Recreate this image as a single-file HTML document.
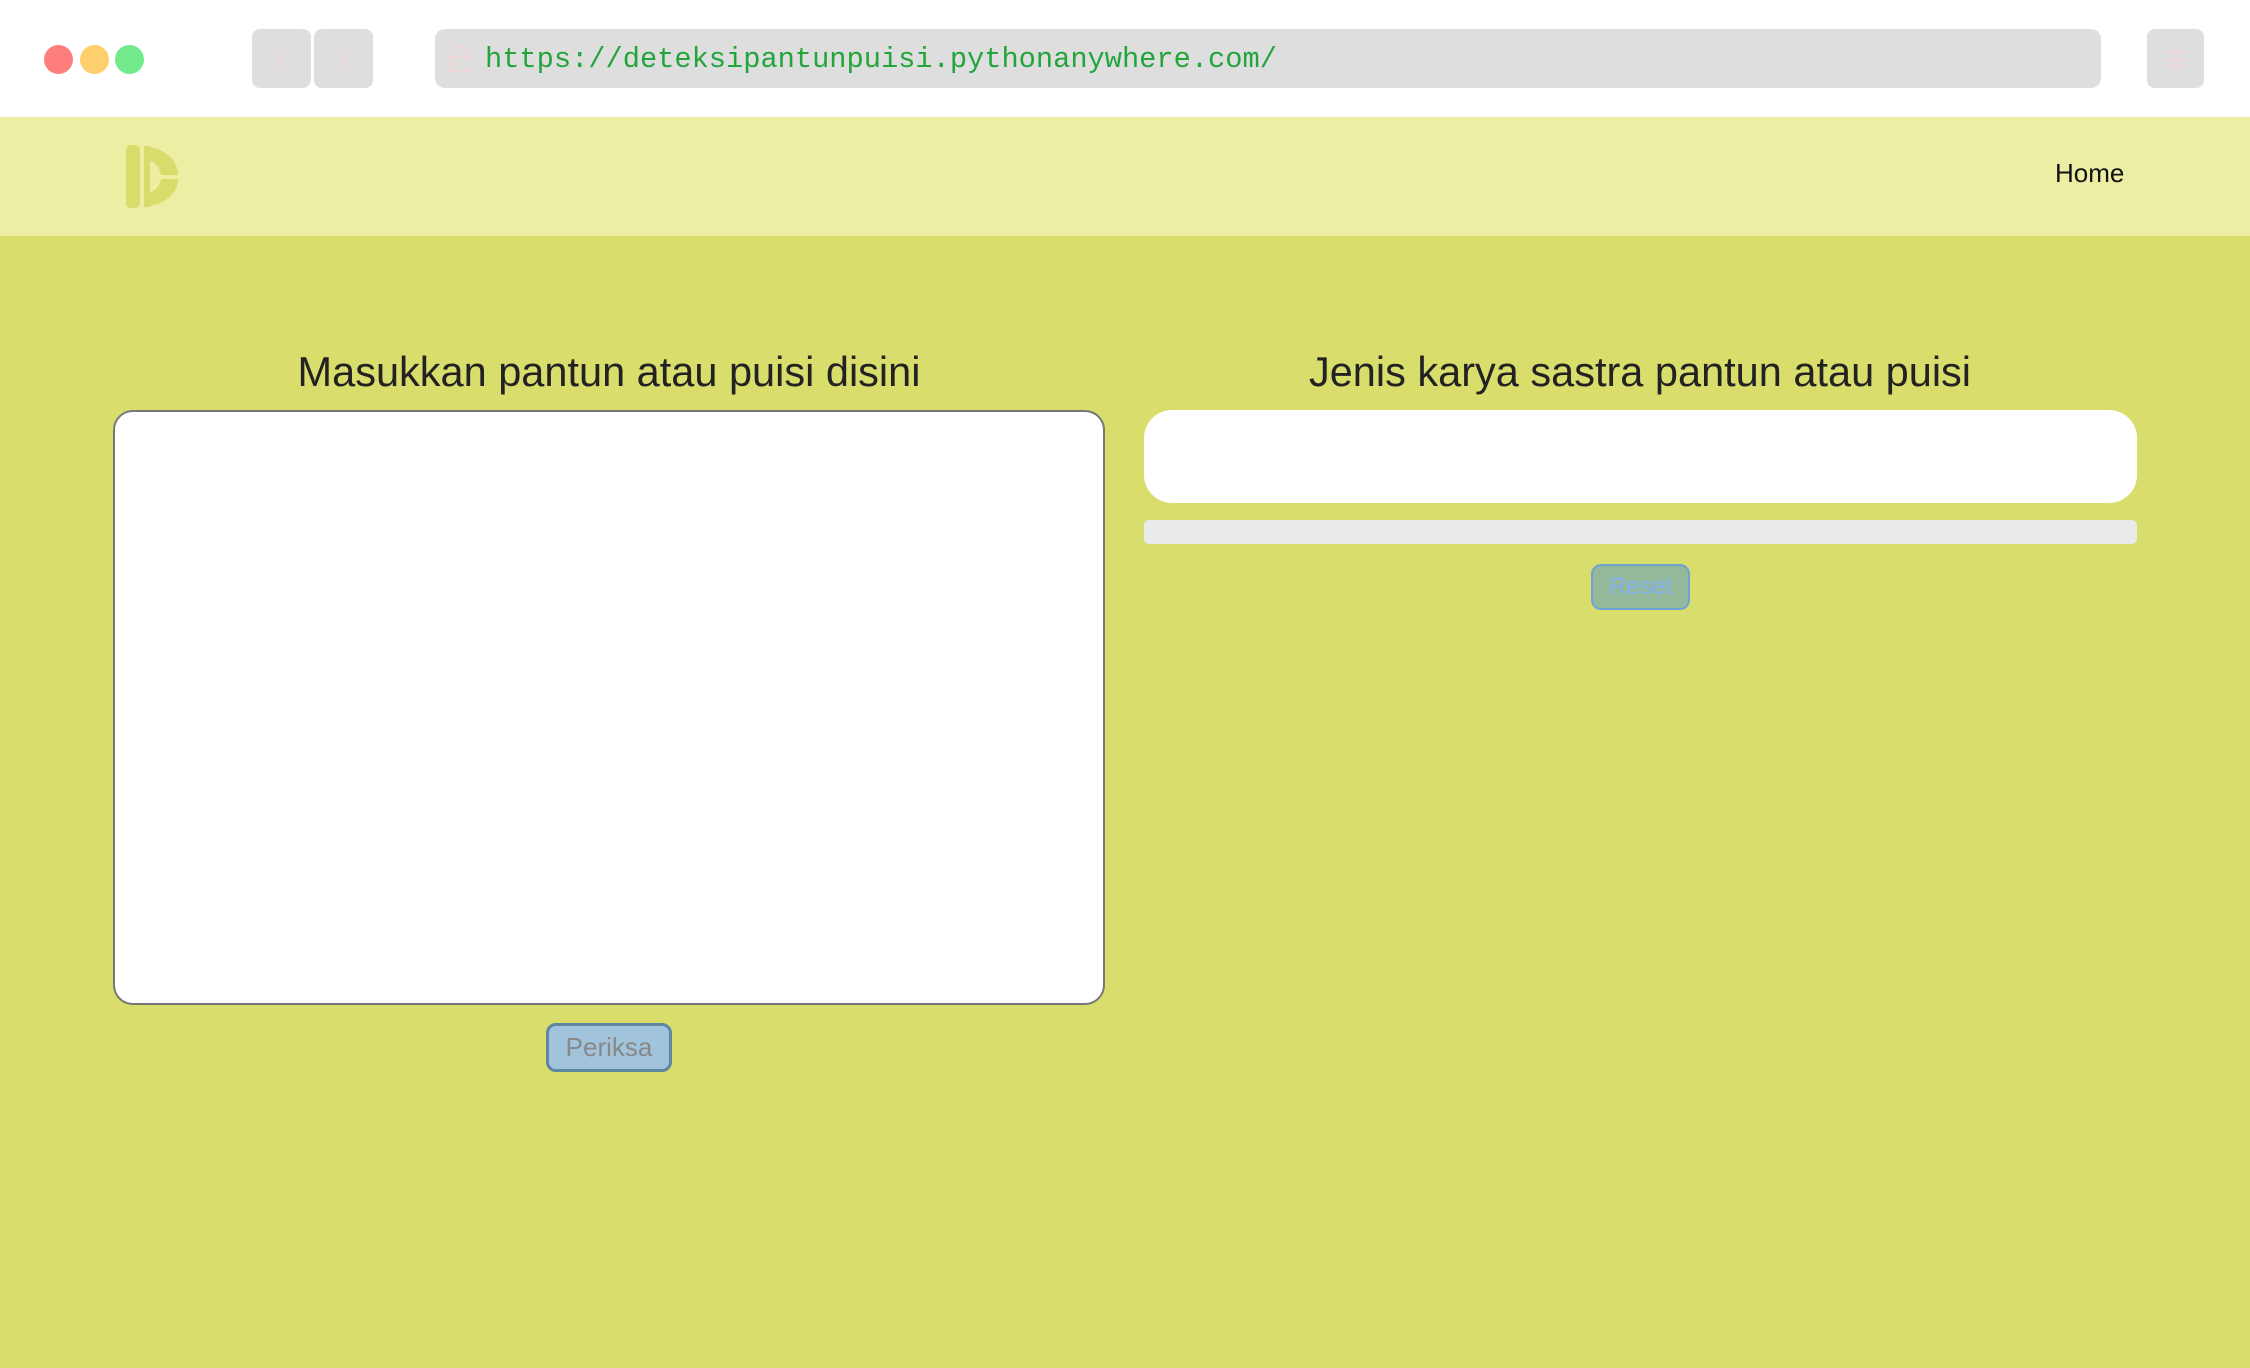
<!DOCTYPE html>
<html><head><meta charset="utf-8"><style>
*{margin:0;padding:0;box-sizing:border-box}
html,body{width:2250px;height:1368px;overflow:hidden;background:#d9dd6c;font-family:"Liberation Sans",sans-serif}
.top{position:absolute;left:0;top:0;width:2250px;height:117px;background:#fff}
.dot{position:absolute;top:45px;width:29px;height:29px;border-radius:50%}
.btn{position:absolute;top:29px;height:59px;background:#dedede;border-radius:8px}
.url{position:absolute;left:435px;top:29px;width:1666px;height:59px;background:#dedede;border-radius:10px}
.url span{position:absolute;left:50px;top:14px;font-family:"Liberation Mono",monospace;font-size:28.7px;color:#22a53a}
.nav{position:absolute;left:0;top:117px;width:2250px;height:119px;background:#eceea4}
.home{position:absolute;left:2055px;top:41px;font-size:26px;color:#111}
h2{position:absolute;top:348px;font-weight:normal;font-size:41.5px;color:#222;text-align:center;width:1000px}
.ta{position:absolute;left:113px;top:410px;width:992px;height:595px;background:#fff;border:2px solid #777;border-radius:20px}
.per{position:absolute;left:546px;top:1023px;width:126px;height:49px;background:#a1c4dc;border:3px solid #5f87a2;border-radius:10px;color:#888;font-size:26px;text-align:center;line-height:43px}
.out{position:absolute;left:1144px;top:410px;width:993px;height:93px;background:#fff;border-radius:28px}
.bar{position:absolute;left:1144px;top:520px;width:993px;height:24px;background:#e8eaec;border-radius:5px}
.reset{position:absolute;left:1591px;top:564px;width:99px;height:46px;background:#94b89a;border:2px solid #6fa3d8;border-radius:10px;color:#80b0ee;font-size:24px;text-align:center;line-height:42px}
</style></head><body>
<div class="top">
<div class="dot" style="left:44px;background:#fe7e7e"></div>
<div class="dot" style="left:80px;background:#fecf6c"></div>
<div class="dot" style="left:115px;background:#72e98b"></div>
<div class="btn" style="left:252px;width:59px"><svg width="59" height="59"><path d="M33 20 L26 30 L33 40" stroke="#f0d8d8" stroke-width="2" fill="none"/></svg></div>
<div class="btn" style="left:314px;width:59px"><svg width="59" height="59"><path d="M26 20 L33 30 L26 40" stroke="#f0d8d8" stroke-width="2" fill="none"/></svg></div>
<div class="url"><svg style="position:absolute;left:12px;top:16px" width="26" height="28"><rect x="3" y="12" width="20" height="14" fill="none" stroke="#f0d8d8" stroke-width="2"/><path d="M7 12 V8 a6 6 0 0 1 12 0 V12" fill="none" stroke="#f0d8d8" stroke-width="2"/></svg><span>https://deteksipantunpuisi.pythonanywhere.com/</span></div>
<div class="btn" style="left:2147px;width:57px"><svg width="57" height="59"><path d="M20 23h18M20 30h18M20 37h18" stroke="#f0d8d8" stroke-width="2"/></svg></div>
</div>
<div class="nav">
<svg style="position:absolute;left:126px;top:28px" width="52" height="63"><rect x="0" y="0" width="14" height="63" rx="5" fill="#d7dc6a"/><path d="M18 1 C40 3 52 16 52 30 L35 30 C34 22 28 16 24 16 L18 16 Z" fill="#d7dc6a"/><path d="M18 62 C40 60 52 47 52 34 L35 34 C34 41 28 47 24 47 L18 47 Z" fill="#d7dc6a"/><rect x="18" y="1" width="6" height="61" fill="#d7dc6a"/></svg>
<div class="home">Home</div>
</div>
<h2 style="left:109px">Masukkan pantun atau puisi disini</h2>
<h2 style="left:1140px">Jenis karya sastra pantun atau puisi</h2>
<div class="ta"></div>
<div class="per">Periksa</div>
<div class="out"></div>
<div class="bar"></div>
<div class="reset">Reset</div>
</body></html>
